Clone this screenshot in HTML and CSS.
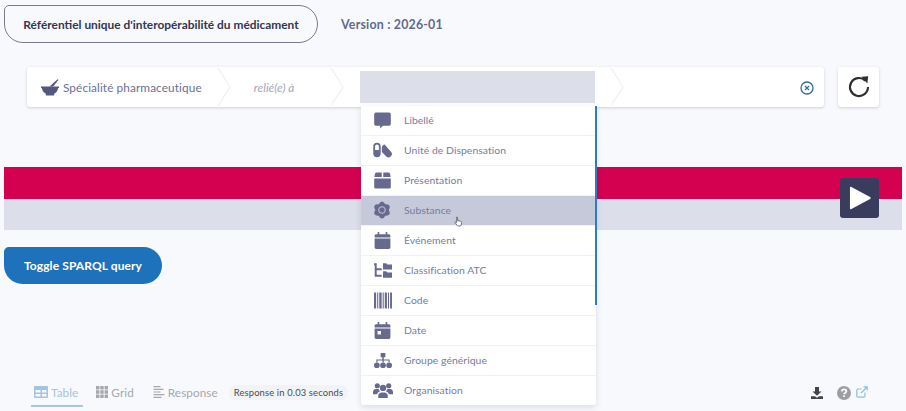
FILE: index.html
```html
<!DOCTYPE html>
<html lang="fr">
<head>
<meta charset="utf-8">
<title>Référentiel unique d'interopérabilité du médicament</title>
<link rel="stylesheet" href="styles.css">
</head>
<body>
<header class="top">
  <div class="title-pill">Référentiel unique d'interopérabilité du médicament</div>
  <div class="version">Version : 2026-01</div>
</header>

<section class="builder-row">
  <div class="builder">
    <div class="crumb crumb-subject">
      <svg class="ico-mortar" viewBox="0 0 18 17"><path d="M0 7.500h18v1.500h-.8c-.4 2.700-1.900 4.600-3.900 5.500v.9c0 .6-.4 1-1 1H5.700c-.6 0-1-.4-1-1v-.9C2.700 13.600 1.200 11.700.8 9H0z"/><path d="M8.500 7.500 16.300.4c.5-.5 1.300.2.800.8L12.300 7.500z"/></svg>
      <span>Spécialité pharmaceutique</span>
    </div>
    <svg class="chev" viewBox="0 0 14 38"><path d="M1 0l12 19L1 38"/></svg>
    <div class="crumb-rel">relié(e) à</div>
    <svg class="chev" viewBox="0 0 14 38"><path d="M1 0l12 19L1 38"/></svg>
    <div class="search-slot"></div>
    <svg class="chev chev-last" viewBox="0 0 14 38"><path d="M1 0l12 19L1 38"/></svg>
    <svg class="ico-clear" viewBox="0 0 14 14"><circle cx="7" cy="7" r="6" /><path d="M5 5l4 4M9 5l-4 4"/></svg>
  </div>
  <button class="refresh" aria-label="Réinitialiser">
    <svg viewBox="0 0 24 24"><path class="arc" d="M18.300 5.600A9 9 0 1 0 21 12"/><path class="tip" d="M14.500 1.800 21.200 1.300 20.300 8.400z"/></svg>
  </button>
</section>

<section class="query-band">
  <div class="band-red"></div>
  <div class="band-grey"></div>
  <button class="play" aria-label="Exécuter"><svg viewBox="0 0 24 26"><path d="M2.500 1.500 22 12a1.200 1.200 0 0 1 0 2L2.500 24.500A1 1 0 0 1 1 23.700V2.300a1 1 0 0 1 1.500-.8z"/></svg></button>
</section>

<button class="toggle">Toggle SPARQL query</button>

<nav class="tabs">
  <div class="tab tab-active">
    <svg class="ico-tab" viewBox="0 0 14 12"><path fill-rule="evenodd" d="M1 0h12a1 1 0 0 1 1 1v10a1 1 0 0 1-1 1H1a1 1 0 0 1-1-1V1a1 1 0 0 1 1-1zm.500 4v2.500h5V4zm6.500 0v2.500h4.500V4zM1.500 8v2.500h5V8zM8 8v2.500h4.500V8z"/></svg>
    <span>Table</span>
  </div>
  <div class="tab">
    <svg class="ico-tab" viewBox="0 0 12 12"><path d="M0 0h3.400v3.400H0zM4.300 0h3.400v3.400H4.300zM8.600 0H12v3.400H8.600zM0 4.300h3.400v3.400H0zM4.300 4.300h3.400v3.400H4.300zM8.600 4.300H12v3.400H8.600zM0 8.600h3.400V12H0zM4.300 8.600h3.400V12H4.300zM8.600 8.600H12V12H8.600z"/></svg>
    <span>Grid</span>
  </div>
  <div class="tab tab-response">
    <svg class="ico-tab" viewBox="0 0 11 12"><path d="M0 0h7v1.200H0zM0 2.700h10v1.200H0zM0 5.400h7v1.200H0zM0 8.100h11v1.200H0zM0 10.800h8V12H0z"/></svg>
    <span>Response</span>
  </div>
  <div class="timing">Response in 0.03 seconds</div>
  <div class="tab-tools">
    <svg class="ico-dl" viewBox="0 0 12 12"><path d="M4 0h4v4.500h2.500L6 8.800 1.500 4.500H4zM0 9.300h4l2 1.400 2-1.400h4V12H0z"/></svg>
    <svg class="ico-help" viewBox="0 0 14 14"><circle cx="7" cy="7" r="7"/><path class="q" d="M4.800 5.400C4.900 4.100 5.800 3.400 7.100 3.400 8.400 3.400 9.300 4.200 9.300 5.300c0 1.700-2.200 1.600-2.200 3"/><rect class="qd" x="6.200" y="9.300" width="1.800" height="1.700"/></svg>
    <svg class="ico-ext" viewBox="0 0 12 12"><path d="M9 6.500V10a1.200 1.200 0 0 1-1.200 1.200H2A1.200 1.200 0 0 1 .8 10V4.200A1.200 1.200 0 0 1 2 3h3.500M5 7l6-6M7.500 .8h3.700v3.700"/></svg>
  </div>
</nav>

<ul class="menu">
  <li class="item">
    <svg class="ico" viewBox="0 0 18 18"><path d="M2 .5h14A1.800 1.800 0 0 1 17.800 2.300v10.400A1.800 1.800 0 0 1 16 14.500H9.500l-3 3v-3H2A1.800 1.800 0 0 1 .2 12.700V2.300A1.800 1.800 0 0 1 2 .5z"/></svg>
    <span>Libellé</span>
  </li>
  <li class="item">
    <svg class="ico ico-pills" viewBox="0 0 20 16"><path fill-rule="evenodd" d="M4.200 .3A3.900 3.900 0 0 1 8.100 4.200v7.600a3.900 3.900 0 0 1-7.800 0V4.200A3.900 3.900 0 0 1 4.200 .3zM2.200 8h4V4.200a2 2 0 0 0-4 0z"/><path d="M12.200 2.200 18.900 9.800a3.500 3.500 0 0 1-5.200 4.700L9.300 10V5c.3-1.200 1.900-3 2.900-2.800z"/></svg>
    <span>Unité de Dispensation</span>
  </li>
  <li class="item">
    <svg class="ico" viewBox="0 0 16 16"><path d="M2.500 .5h4.800v4.300H.3L1 1.500C1.200.9 1.800.5 2.500.5zM8.700.5h4.800c.7 0 1.300.4 1.500 1l.7 3.300H8.700zM.2 6h15.600v8c0 .9-.7 1.600-1.600 1.600H1.800C.9 15.600.2 14.900.2 14z"/></svg>
    <span>Présentation</span>
  </li>
  <li class="item item-hover">
    <svg class="ico ico-atom" viewBox="0 0 18 18"><ellipse cx="9" cy="9" rx="4.400" ry="8.600"/><ellipse cx="9" cy="9" rx="4.400" ry="8.600" transform="rotate(60 9 9)"/><ellipse cx="9" cy="9" rx="4.400" ry="8.600" transform="rotate(-60 9 9)"/><circle class="atom-ring" cx="9" cy="9" r="3.300"/><circle cx="9" cy="9" r="1.300"/></svg>
    <span>Substance</span>
  </li>
  <li class="item">
    <svg class="ico" viewBox="0 0 16 17"><path d="M3.200 0h1.600v2.200h6.400V0h1.600v2.200h1.500c.9 0 1.600.7 1.600 1.600v1.700H.1V3.800c0-.9.700-1.600 1.600-1.600h1.500zM.1 6.500h15.800v8.800c0 .9-.7 1.600-1.600 1.600H1.700c-.9 0-1.600-.7-1.600-1.600z"/></svg>
    <span>Événement</span>
  </li>
  <li class="item">
    <svg class="ico ico-wide" viewBox="0 0 20 16"><path d="M0 0h3v5.500h5.500v2.200H3v5h5.500v2.200H.8V2.300H0z"/><path d="M10 0h3.500l1.200 1.300H20v5.700H10zM10 8.800h3.500l1.200 1.300H20V16H10z"/></svg>
    <span>Classification ATC</span>
  </li>
  <li class="item">
    <svg class="ico ico-wide" viewBox="0 0 17 15"><path d="M0 0h2v15H0zM3 0h1v15H3zM5 0h2.200v15H5zM8.200 0h1v15h-1zM10.200 0h2v15h-2zM13.200 0h1v15h-1zM15.200 0H17v15h-1.800z"/></svg>
    <span>Code</span>
  </li>
  <li class="item">
    <svg class="ico" viewBox="0 0 16 17"><path fill-rule="evenodd" d="M3.200 0h1.600v2.200h6.400V0h1.600v2.200h1.500c.9 0 1.600.7 1.600 1.600v1.700H.1V3.800c0-.9.700-1.600 1.600-1.600h1.500zM.1 6.500h15.800v8.800c0 .9-.7 1.600-1.600 1.600H1.700c-.9 0-1.600-.7-1.600-1.600zM3 9v3.500h3.500V9z"/></svg>
    <span>Date</span>
  </li>
  <li class="item">
    <svg class="ico ico-wide" viewBox="0 0 19 16"><path d="M7 0h5v4.500h-1.700v2.400h6.200v3h-1.200V8H10.300v2H9V8H3.700v2H2.500V6.900h6.200V4.500H7z"/><circle cx="3" cy="13" r="3"/><circle cx="9.500" cy="13" r="3"/><circle cx="16" cy="13" r="3"/></svg>
    <span>Groupe générique</span>
  </li>
  <li class="item">
    <svg class="ico ico-xl" viewBox="0 0 21 16"><circle cx="4.500" cy="3" r="2.700"/><circle cx="16.500" cy="3" r="2.700"/><circle cx="10.500" cy="5.300" r="3.300"/><path d="M0 10c0-2.600 1.500-3.500 3-3.500h2.800c.4 1 1 1.800 1.800 2.400C5.700 9.600 4.600 10.600 4.400 12H0z M21 10c0-2.600-1.500-3.500-3-3.500h-2.800c-.4 1-1 1.800-1.800 2.400 1.900.7 3 1.700 3.200 3.100H21z"/><path d="M5.500 16v-2.400C5.500 11.500 7 10 9 10h3c2 0 3.500 1.500 3.500 3.600V16z"/></svg>
    <span>Organisation</span>
  </li>
</ul>
<div class="menu-scroll"></div>
<svg class="cursor" viewBox="0 0 10 12"><path d="M3 1c.6 0 1 .4 1 1v3l3.500.8c.7.2 1 .7.900 1.300L8 10c-.1.600-.5 1-1.100 1H4.500c-.4 0-.7-.2-.9-.5L1.200 7.200c-.4-.6.400-1.300 1-.8l.8.700V2c0-.6 0-1 0-1z"/></svg>
</body>
</html>
```

FILE: styles.css
```css
* { box-sizing: border-box; }
html, body { height: 411px; }
body {
  margin: 0;
  background: #f8f9fc;
  font-family: Lato, "Open Sans", sans-serif;
  color: #6b6f96;
  overflow: hidden;
  position: relative;
}
.top {
  display: flex;
  align-items: center;
  padding: 5px 0 0 4px;
  height: 43px;
}
.title-pill {
  width: 314px;
  height: 38px;
  border: 1px solid #77798f;
  border-radius: 5px 19px 19px 19px;
  display: flex;
  align-items: center;
  justify-content: center;
  font-size: 11.900px;
  font-weight: 700;
  color: #33364f;
  background: #f8f9fc;
}
.version {
  margin-left: 23px;
  font-size: 12.400px;
  font-weight: 700;
  color: #5f6a8f;
  letter-spacing: .2px;
}
.builder-row {
  display: flex;
  margin: 24px 0 0 27px;
  gap: 14px;
  height: 40px;
}
.builder {
  width: 797px;
  height: 40px;
  background: #fff;
  border-radius: 3px;
  box-shadow: 0 1px 3px rgba(60, 64, 100, .22);
  display: flex;
  align-items: center;
  position: relative;
}
.crumb-subject {
  display: flex;
  align-items: center;
  width: 190px;
  padding-left: 14px;
  font-size: 11.800px;
  color: #6b6f96;
  letter-spacing: .1px;
  white-space: nowrap;
  flex: none;
}
.ico-mortar { width: 18px; height: 17px; fill: #54587e; margin-right: 4px; flex: none; }
.chev { width: 14px; height: 38px; fill: none; stroke: #eff0f5; stroke-width: 1.200; flex: none; }
.crumb-rel {
  width: 99px;
  text-align: center;
  font-size: 11.800px;
  font-style: italic;
  color: #a2a5bd;
  padding-right: 13px;
  flex: none;
}
.search-slot {
  width: 235px;
  height: 32px;
  margin-left: 16px;
  background: #dcdfe9;
  flex: none;
}
.chev-last { margin-left: 15px; }
.ico-clear {
  width: 14px;
  height: 14px;
  fill: none;
  stroke: #336c9b;
  stroke-width: 1.300;
  position: absolute;
  right: 10px;
  top: 14px;
}
.refresh {
  width: 41px;
  height: 40px;
  padding: 0;
  border: 0;
  border-radius: 3px;
  background: #fff;
  box-shadow: 0 1px 3px rgba(60, 64, 100, .22);
  display: flex;
  align-items: center;
  justify-content: center;
}
.refresh svg { width: 24px; height: 24px; }
.refresh .arc { fill: none; stroke: #2f2f33; stroke-width: 2.200; }
.refresh .tip { fill: #2f2f33; }
.query-band {
  position: relative;
  margin: 60px 4px 0 4px;
}
.band-red { height: 32px; background: #d40050; }
.band-grey { height: 31px; background: #dcdfe9; }
.play {
  position: absolute;
  left: 836px;
  top: 11px;
  width: 39px;
  height: 40px;
  padding: 0;
  border: 0;
  border-radius: 3px;
  background: #3a3c5e;
  display: flex;
  align-items: center;
  justify-content: center;
}
.play svg { width: 23px; height: 26px; fill: #fff; margin-left: 2px; }
.toggle {
  display: block;
  margin: 17px 0 0 4px;
  width: 158px;
  height: 37px;
  border: 0;
  border-radius: 5px 19px 19px 19px;
  background: #1e72bb;
  color: #fff;
  font-family: inherit;
  font-size: 12px;
  font-weight: 700;
  letter-spacing: .1px;
}
.tabs {
  display: flex;
  align-items: center;
  margin: 93px 0 0 31px;
  height: 30px;
  position: relative;
}
.tab {
  display: flex;
  align-items: center;
  gap: 3px;
  font-size: 11.700px;
  color: #a5a7ad;
  height: 30px;
  padding: 0 3px 0 4px;
  margin-right: 12px;
  letter-spacing: .1px;
}
.tab-active {
  color: #a3c4e2;
  border-bottom: 2px solid #a6c7e5;
  padding: 2px 5px 0 3px;
  margin-right: 9px;
}
.tab-response { margin-right: 10px; }
.ico-tab { width: 12px; height: 12px; fill: currentColor; flex: none; }
.tab-active .ico-tab { width: 14px; }
.timing {
  margin-left: -2px;
  padding: 2px 5px;
  background: #f2f3f6;
  border-radius: 7px;
  font-size: 9.400px;
  color: #4a4b52;
  letter-spacing: .15px;
  white-space: nowrap;
}
.tab-tools {
  position: absolute;
  right: 38px;
  top: 9px;
  display: flex;
  align-items: center;
}
.ico-dl { width: 12px; height: 12px; fill: #43434a; margin-right: 14px; }
.ico-help { width: 14px; height: 14px; fill: #9e9ea2; margin-right: 5px; }
.ico-help .q { fill: none; stroke: #f8f9fc; stroke-width: 1.900; }
.ico-help .qd { fill: #f8f9fc; }
.ico-ext { width: 12px; height: 12px; fill: none; stroke: #8dbce6; stroke-width: 1.200; margin-top: -2px; }
.menu {
  position: absolute;
  left: 361px;
  top: 106px;
  width: 235px;
  margin: 0;
  padding: 0;
  list-style: none;
  background: #fff;
  border-radius: 0 0 3px 3px;
  box-shadow: 0 2px 6px rgba(60, 64, 100, .16);
}
.item {
  display: flex;
  align-items: center;
  height: 30px;
  padding: 0 0 1px 13px;
  border-bottom: 1px solid #f1f2f5;
  font-size: 10.400px;
  color: #777b9e;
  letter-spacing: .05px;
  position: relative;
}
.item:last-child { border-bottom: 0; height: 29px; }
.item-hover { background: #c5c9da; }
.ico { width: 17px; height: 17px; fill: #67698f; flex: none; margin: 0 13px 0 0; }
.ico-wide { width: 18px; margin: 0 12px 0 0; }
.ico-xl { width: 20px; margin: 0 11px 0 -1px; }
.ico-pills { width: 19px; height: 16px; margin: 0 12px 0 -1px; }
.ico-atom { width: 18px; height: 18px; margin: 0 13px 0 -1px; }
.atom-ring { fill: none; stroke: #c5c9da; stroke-width: 1; }
.menu-scroll {
  position: absolute;
  left: 595px;
  top: 106px;
  width: 2px;
  height: 199px;
  background: #2b7cc0;
}
.cursor {
  position: absolute;
  left: 454px;
  top: 216px;
  width: 9px;
  height: 11px;
  fill: #fff;
  stroke: #55565f;
  stroke-width: .9;
}
```
